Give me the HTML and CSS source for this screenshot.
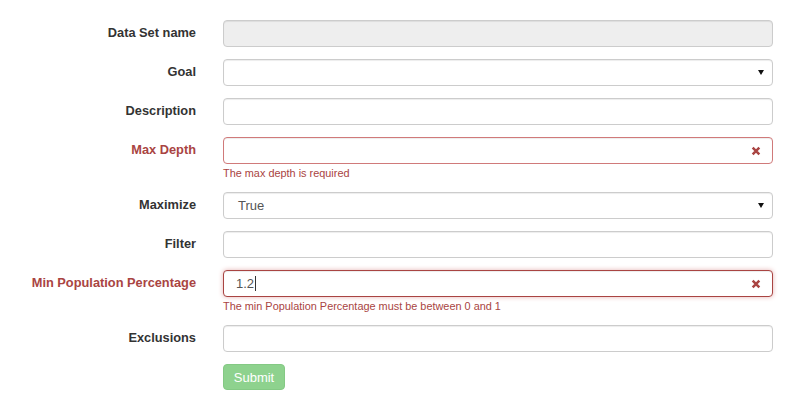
FILE: index.html
```html
<!DOCTYPE html>
<html>
<head>
<meta charset="utf-8">
<link rel="stylesheet" href="styles.css">
</head>
<body>
<form class="form">
  <div class="row">
    <label class="label">Data Set name</label>
    <div class="field"><div class="control disabled"></div></div>
  </div>
  <div class="row">
    <label class="label">Goal</label>
    <div class="field"><div class="control select"><span class="caret"></span></div></div>
  </div>
  <div class="row">
    <label class="label">Description</label>
    <div class="field"><div class="control"></div></div>
  </div>
  <div class="row error">
    <label class="label">Max Depth</label>
    <div class="field">
      <div class="control invalid">
        <svg class="xicon" viewBox="0 0 12 12" width="11" height="11"><path d="M2 2L10 10M10 2L2 10" stroke="#a94442" stroke-width="3" stroke-linecap="butt"/></svg>
      </div>
      <div class="help">The max depth is required</div>
    </div>
  </div>
  <div class="row">
    <label class="label">Maximize</label>
    <div class="field"><div class="control select"><span class="value">True</span><span class="caret"></span></div></div>
  </div>
  <div class="row">
    <label class="label">Filter</label>
    <div class="field"><div class="control"></div></div>
  </div>
  <div class="row error">
    <label class="label">Min Population Percentage</label>
    <div class="field">
      <div class="control invalid focused">
        <span class="value typed">1.2<span class="cursor"></span></span>
        <svg class="xicon" viewBox="0 0 12 12" width="11" height="11"><path d="M2 2L10 10M10 2L2 10" stroke="#a94442" stroke-width="3" stroke-linecap="butt"/></svg>
      </div>
      <div class="help">The min Population Percentage must be between 0 and 1</div>
    </div>
  </div>
  <div class="row">
    <label class="label">Exclusions</label>
    <div class="field"><div class="control"></div></div>
  </div>
  <div class="row">
    <span></span>
    <div class="field"><button type="button" class="submit">Submit</button></div>
  </div>
</form>
</body>
</html>
```
FILE: styles.css
```css
html, body {
  margin: 0;
  padding: 0;
  background: #fff;
  font-family: "Liberation Sans", Arial, sans-serif;
}
.form {
  padding: 20px 27px 0 0;
  display: flex;
  flex-direction: column;
  gap: 12px;
}
.row {
  display: grid;
  grid-template-columns: 196px 1fr;
  column-gap: 27px;
  align-items: start;
}
.label {
  text-align: right;
  font-weight: bold;
  font-size: 12.8px;
  color: #333;
  height: 27px;
  line-height: 26px;
}
.row.error .label {
  color: #a94442;
}
.field {
  display: flex;
  flex-direction: column;
}
.control {
  box-sizing: border-box;
  height: 27px;
  border: 1px solid #ccc;
  border-radius: 4px;
  background: #fff;
  box-shadow: inset 0 1px 1px rgba(0,0,0,0.075);
  display: flex;
  align-items: center;
  padding: 0 8px 0 12px;
}
.control.disabled {
  background: #eee;
}
.control.invalid {
  border-color: #d07a7a;
}
.control.focused {
  border-color: #a94442;
  box-shadow: inset 0 1px 1px rgba(0,0,0,0.075), 0 0 5px #e6b3b3;
}
.value {
  font-size: 13px;
  color: #555;
  margin-left: 2px;
}
.typed {
  margin-left: 0;
  display: inline-flex;
  align-items: center;
}
.cursor {
  display: inline-block;
  width: 1px;
  height: 15px;
  background: #333;
  margin-left: 1px;
}
.caret {
  margin-left: auto;
  width: 0;
  height: 0;
  border-left: 3px solid transparent;
  border-right: 3px solid transparent;
  border-top: 5px solid #111;
}
.xicon {
  margin-left: auto;
  margin-right: 3px;
  width: 10px;
  height: 10px;
}
.help {
  margin-top: 2px;
  height: 14px;
  line-height: 14px;
  font-size: 10.9px;
  color: #a94442;
}
.submit {
  align-self: flex-start;
  width: 62px;
  height: 26px;
  border: 1px solid #84c984;
  border-radius: 4px;
  background: #8ed28e;
  color: #fff;
  font-family: "Liberation Sans", Arial, sans-serif;
  font-size: 13px;
  font-weight: normal;
  padding: 0;
}
```
